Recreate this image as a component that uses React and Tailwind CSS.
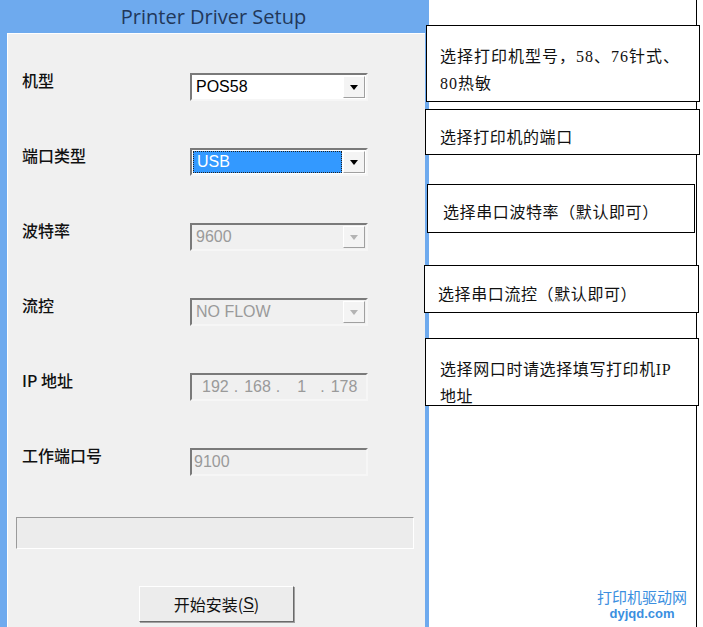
import React from 'react';

const sans = { fontFamily: '"Liberation Sans", Arial, sans-serif' };
const cjk = { fontFamily: '"Noto Sans CJK SC", sans-serif' };
const note = { fontFamily: '"Liberation Serif", "Noto Sans CJK SC", serif' };

function Arrow({ disabled }) {
  return (
    <div className="w-[22px] h-[22px] mt-[1px] mr-[1px] flex items-center justify-center bg-[#f4f4f4] border border-t-white border-l-white border-r-[#a0a0a0] border-b-[#a0a0a0]">
      <svg width="8" height="5" viewBox="0 0 8 5">
        <path d="M0 0h8L4 5z" fill={disabled ? '#b4b4b4' : '#000'} />
      </svg>
    </div>
  );
}

function Combo({ value, disabled, selected }) {
  return (
    <div
      className={`w-[178px] h-[28px] flex border-2 border-t-[#7a7a7a] border-l-[#7a7a7a] border-b-[#f6f6f6] border-r-[#f6f6f6] ${disabled ? 'bg-[#f0f0f0]' : 'bg-white'}`}
    >
      <div className="flex-1 flex items-center p-[1px]">
        <div
          className={`w-full h-full flex items-center px-[3px] text-[16px] ${selected ? 'bg-[#3399ff] text-white border border-dotted border-[#222]' : disabled ? 'text-[#9a9a9a]' : 'text-black'}`}
          style={sans}
        >
          {value}
        </div>
      </div>
      <Arrow disabled={disabled} />
    </div>
  );
}

function Field({ children }) {
  return (
    <div
      className="w-[178px] h-[28px] flex items-center bg-[#f0f0f0] border-2 border-t-[#7a7a7a] border-l-[#7a7a7a] border-b-[#f6f6f6] border-r-[#f6f6f6] text-[16px] text-[#9a9a9a]"
      style={sans}
    >
      {children}
    </div>
  );
}

function Row({ label, children }) {
  return (
    <div className="flex items-start h-[28px]">
      <div className="w-[182px] pl-[14px] text-[16px] leading-[14px] font-medium text-[#111]" style={cjk}>
        {label}
      </div>
      {children}
    </div>
  );
}

function Note({ className, children }) {
  return (
    <div className={`border border-black bg-white text-[16px] tracking-[0.6px] text-[#111] ${className}`} style={note}>
      {children}
    </div>
  );
}

export default function App() {
  return (
    <div className="w-[703px] h-[627px] flex bg-white overflow-hidden">
      <div className="w-[429px] h-full flex flex-col bg-[#6eaaee]">
        <div className="h-[33px] flex items-center justify-center pr-[2px] text-[20px] text-[#22385a]" style={{ fontFamily: '"Open Sans", "Noto Sans", sans-serif' }}>
          Printer Driver Setup
        </div>
        <div className="flex-1 ml-[7px] mr-[4px] bg-[#f0f0f0] border-t border-l border-white flex flex-col">
          <div className="flex flex-col gap-[47px] mt-[39px]">
            <Row label="机型">
              <Combo value="POS58" />
            </Row>
            <Row label="端口类型">
              <Combo value="USB" selected />
            </Row>
            <Row label="波特率">
              <Combo value="9600" disabled />
            </Row>
            <Row label="流控">
              <Combo value="NO FLOW" disabled />
            </Row>
            <Row label="IP 地址">
              <Field>
                <span className="ml-[10px]">192</span>
                <span className="ml-[5px]">.</span>
                <span className="ml-[6px]">168</span>
                <span className="ml-[5px]">.</span>
                <span className="ml-[17px]">1</span>
                <span className="ml-[14px]">.</span>
                <span className="ml-[6px]">178</span>
              </Field>
            </Row>
            <Row label="工作端口号">
              <Field>
                <span className="ml-[2px]">9100</span>
              </Field>
            </Row>
          </div>
          <div className="mt-[41px] ml-[8px] w-[398px] h-[32px] border border-t-[#9a9a9a] border-l-[#9a9a9a] border-b-white border-r-white bg-[#ececec]" />
          <div className="mt-[37px] ml-[131px] w-[155px] h-[36px] flex items-center justify-center bg-[#ececec] border border-t-white border-l-white border-r-[#6a6a6a] border-b-[#6a6a6a] shadow-[1px_1px_0_#a0a0a0] text-[16px] text-[#111]" style={cjk}>
            开始安装(<span className="underline underline-offset-2" style={sans}>S</span>)
          </div>
        </div>
      </div>
      <div className="w-[268px] h-full border-r border-black flex flex-col">
        <Note className="mt-[25px] -ml-[3px] w-[274px] h-[77px] pl-[13px] pt-[17px] leading-[27px] tracking-[1px]">
          选择打印机型号，58、76针式、<br />80热敏
        </Note>
        <Note className="mt-[7px] -ml-[4px] w-[275px] h-[46px] pl-[14px] pt-[20px] leading-[16px]">
          选择打印机的端口
        </Note>
        <Note className="mt-[29px] -ml-[2px] w-[268px] h-[49px] pl-[15px] pt-[20px] leading-[16px]">
          选择串口波特率（默认即可）
        </Note>
        <Note className="mt-[32px] -ml-[5px] w-[275px] h-[48px] pl-[13px] pt-[21px] leading-[16px]">
          选择串口流控（默认即可）
        </Note>
        <Note className="mt-[25px] -ml-[4px] w-[274px] h-[68px] pl-[14px] pt-[17px] leading-[27px]">
          选择网口时请选择填写打印机IP<br />地址
        </Note>
        <div className="mt-auto mb-[6px] self-end mr-[9px] flex flex-col items-center gap-[1px] text-[#3b8fe0]">
          <div className="text-[15px] leading-[18px]" style={cjk}>打印机驱动网</div>
          <div className="text-[13px] leading-[14px] font-bold" style={sans}>dyjqd.com</div>
        </div>
      </div>
    </div>
  );
}
